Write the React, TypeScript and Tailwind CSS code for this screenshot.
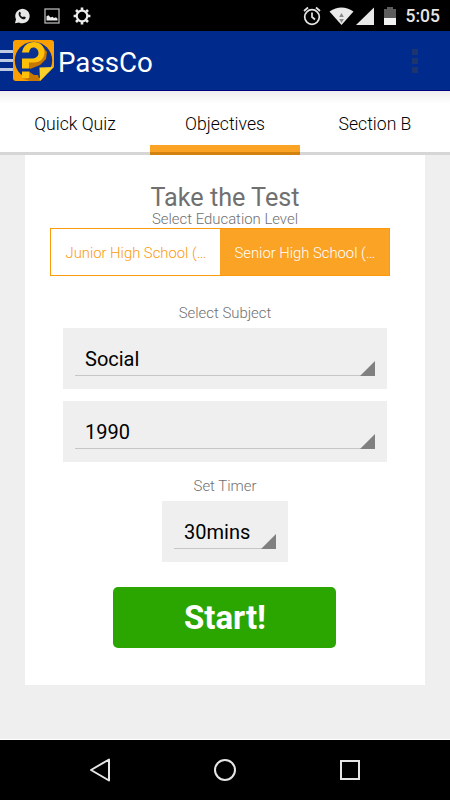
import { useState } from "react"
import clsx from "clsx"

const tabs = ["Quick Quiz", "Objectives", "Section B"]
const levels = ["Junior High School (…", "Senior High School (…"]

function StatusBar() {
  return (
    <div className="h-[31px] shrink-0 bg-black flex items-center justify-between pl-[14px] pr-[10px]">
      <div className="flex items-center gap-[14px]">
        <svg width="16" height="16" viewBox="0 0 16 16">
          <path d="M1 15.2 2 11.3A7.2 7.2 0 1 1 5 14.4Z" fill="#e8e8e8" />
          <path d="M5 4.2c.5-.6 1.1-.5 1.4.1l.5 1.2c.2.5-.7 1-.5 1.4.5 1 1.2 1.7 2.3 2.2.5.2.9-.9 1.4-.7l1.3.7c.7.4.2 1.7-.6 2-1.4.6-3.3-.3-4.6-1.6C4.9 8.2 4 5.6 5 4.2Z" fill="#111" />
        </svg>
        <svg width="16" height="16" viewBox="0 0 16 16">
          <rect x="1" y="1" width="14" height="14" fill="none" stroke="#b5b5b5" strokeWidth="1.3" />
          <path d="M2.500 12.500V8.300l2-1 2 2.200 2-.8 1.500 1.300 2-.7 1.500 1.500v1.700Z" fill="#eee" />
        </svg>
        <svg width="18" height="18" viewBox="0 0 18 18" className="-ml-px">
          <circle cx="9" cy="9" r="5.3" fill="none" stroke="#ececec" strokeWidth="2.2" />
          <path
            d="M9 .6V4M9 14v3.400M.6 9H4M14 9h3.400M3 3l2 2M13 13 15 15M3 15l2-2M13 5 15 3"
            stroke="#ececec"
            strokeWidth="2.6"
          />
        </svg>
      </div>
      <div className="flex items-center">
        <svg width="93" height="20" viewBox="0 0 93 20" className="mr-[10px]">
          {/* alarm */}
          <g fill="none" stroke="#e6e6e6" strokeWidth="1.7">
            <circle cx="9" cy="11" r="7.3" />
            <path d="M9 6.500V11l3 2.500M1 5l4-3.500M17 5l-4-3.500" />
          </g>
          {/* wifi */}
          <path d="M26.500 5.500Q38.500-2.500 50.500 5.500L38.500 19Z" fill="#e9e9e9" />
          <path d="M38.500 7l2.300 4h-4.600ZM38.500 17l-2.300-4h4.600Z" fill="#888" />
          <path d="M71 1.500V19H53Z" fill="#e9e9e9" />
          {/* battery */}
          <path d="M84 1h6v2h3v9H81V3h3Z" fill="#5c5c5c" />
          <path d="M81 12h12v7H81Z" fill="#f2f2f2" />
        </svg>
        <span className="text-[17.5px] font-medium text-[#e6e6e6] leading-[29px] pt-[2px]">5:05</span>
      </div>
    </div>
  )
}

function Logo() {
  return (
    <svg width="41" height="41" viewBox="0 0 41 41">
      <path d="M3 0H38Q41 0 41 3V27L27 41H3Q0 41 0 38V3Q0 0 3 0Z" fill="#fba000" />
      <circle cx="20.5" cy="20.5" r="18.7" fill="#0a3190" />
      {/* long shadow */}
      <path d="M30 7 34 12 33 19 27 25 17 29V22L24 20 27 14Z" fill="#c87800" />
      <path d="M16.500 32 21 35 25 35 27 41H17L9 38.500H16.500Z" fill="#c87800" />
      <path d="M9 12.500C10 6 15 2 21 2c6.500 0 10.500 4.500 10.500 10.500 0 6-4.500 10-10.500 10h-4.500v6H9V18.500h9c5 0 7.500-2 7.500-5.500 0-3-2-5.500-5-5.500-2.500 0-4 1.500-4.500 5Z" fill="#ffc107" />
      <path d="M9 31.500h7.500V38H9Z" fill="#ffc107" />
      <path d="M26.500 27.500 40.500 27 27 41Z" fill="#ffd028" />
    </svg>
  )
}

function Header() {
  return (
    <header className="h-[60px] shrink-0 bg-[#002b8d] border-b border-[#000080] flex items-center">
      <div className="w-[13px] flex flex-col gap-[6px]">
        <div className="h-[3px] bg-[#bfcae3]" />
        <div className="h-[3px] bg-[#bfcae3]" />
        <div className="h-[3px] bg-[#bfcae3]" />
      </div>
      <Logo />
      <h1 className="pl-[4px] pt-[4px] text-[27.7px] leading-8 text-white">PassCo</h1>
      <div className="ml-auto mr-[32px] flex flex-col gap-[3px]">
        <div className="size-[6px] bg-[#1c3470]" />
        <div className="size-[6px] bg-[#1c3470]" />
        <div className="size-[6px] bg-[#1c3470]" />
      </div>
    </header>
  )
}

function Spinner({ value, className }: { value: string; className: string }) {
  return (
    <button className={clsx("flex items-start h-[61px] bg-[#efefef] px-3 pt-3 text-left", className)}>
      <div className="relative w-full h-[36px] border-b border-[#c6c6c6] pl-[10px] text-[20px] leading-[24px] text-black">
        <span className="block pt-[7px]">{value}</span>
        <svg width="15" height="15" className="absolute right-0 -bottom-px">
          <path d="M15 0V15H0Z" fill="#808080" />
        </svg>
      </div>
    </button>
  )
}

export default function App() {
  const [tab, setTab] = useState(1)
  const [level, setLevel] = useState(1)

  return (
    <div className="w-[450px] h-[800px] flex flex-col overflow-hidden bg-[#efefef] font-['Roboto',sans-serif]">
      <StatusBar />
      <Header />

      <nav className="h-[64px] shrink-0 flex bg-linear-to-b from-[#eeeeee] via-white via-20% to-white">
        {tabs.map((name, i) => (
          <button
            key={name}
            onClick={() => setTab(i)}
            className="flex-1 flex flex-col justify-end text-[17.6px] font-light text-black"
          >
            <span className="pb-[10px] w-full text-center leading-[22px]">{name}</span>
            <div className={clsx("h-[7px] w-full", i === tab && "bg-[#fba325]")} />
            <div className={clsx("h-[3px] w-full", i === tab ? "bg-[#d2820e]" : "bg-[#d6d6d6]")} />
          </button>
        ))}
      </nav>

      <main className="flex-1 px-[25px]">
        <div className="h-[530px] bg-white pt-[29px] flex flex-col items-center text-[#707070]">
          <h2 className="text-[25.2px] leading-[27px]">Take the Test</h2>
          <p className="text-[14.9px] leading-4 font-light">Select Education Level</p>

          <div className="mt-px mr-[10px] flex w-[340px] h-[48px] border border-[#fb9a0c]">
            {levels.map((name, i) => (
              <button
                key={name}
                onClick={() => setLevel(i)}
                className={clsx(
                  "flex-1 min-w-0 pl-[14.5px] pt-[2px] text-[14.8px] font-light text-left whitespace-nowrap",
                  i === level ? "bg-[#fba325] text-white" : "text-[#fb9a0c]"
                )}
              >
                {name}
              </button>
            ))}
          </div>

          <p className="mt-[29px] text-[14.9px] leading-4 font-light">Select Subject</p>
          <Spinner value="Social" className="mt-[7px] w-[324px]" />
          <Spinner value="1990" className="mt-[12px] w-[324px]" />

          <p className="mt-[16px] text-[14.9px] leading-4 font-light">Set Timer</p>
          <Spinner value="30mins" className="mt-[7px] w-[126px]" />

          <button className="mt-[25px] mr-px pl-px h-[61px] w-[223px] rounded-[5px] bg-[#2ba600] text-[33px] font-bold text-white">
            Start!
          </button>
        </div>
      </main>

      <footer className="h-[61px] shrink-0 border-t border-white bg-black flex items-center justify-center gap-[101px]">
        <svg width="24" height="24" viewBox="0 0 24 24" fill="none" stroke="#e6e6e6" strokeWidth="2">
          <path d="M3 12 21 1.500V22.500Z" strokeLinejoin="round" />
        </svg>
        <svg width="24" height="24" viewBox="0 0 24 24" fill="none" stroke="#e6e6e6" strokeWidth="2">
          <circle cx="12" cy="12" r="10" />
        </svg>
        <svg width="24" height="24" viewBox="0 0 24 24" fill="none" stroke="#e6e6e6" strokeWidth="2">
          <rect x="3" y="3" width="18" height="18" />
        </svg>
      </footer>
    </div>
  )
}
